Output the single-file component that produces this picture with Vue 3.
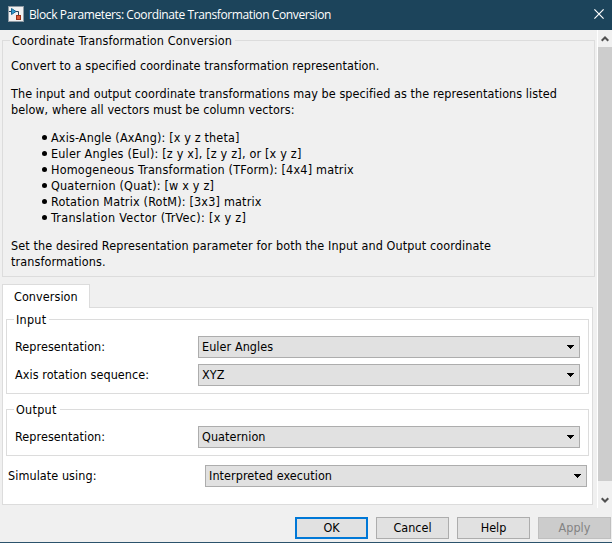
<script setup>
import { ref } from 'vue'

const bullets = [
  'Axis-Angle (AxAng): [x y z theta]',
  'Euler Angles (Eul): [z y x], [z y z], or [x y z]',
  'Homogeneous Transformation (TForm): [4x4] matrix',
  'Quaternion (Quat): [w x y z]',
  'Rotation Matrix (RotM): [3x3] matrix',
  'Translation Vector (TrVec): [x y z]',
]

const groups = ref([
  {
    title: 'Input',
    rows: [
      { label: 'Representation:', value: 'Euler Angles' },
      { label: 'Axis rotation sequence:', value: 'XYZ' },
    ],
  },
  { title: 'Output', rows: [{ label: 'Representation:', value: 'Quaternion' }] },
])

const buttons = [
  { text: 'OK', kind: 'default' },
  { text: 'Cancel', kind: '' },
  { text: 'Help', kind: '' },
  { text: 'Apply', kind: 'disabled' },
]
</script>

<template>
  <div class="dialog">
    <header class="titlebar">
      <svg class="app-icon" width="16" height="16" viewBox="0 0 16 16">
        <rect width="16" height="16" fill="#8e9aa3" />
        <rect x="1" y="1" width="14" height="14" fill="#f1f1f1" />
        <path d="M1 5.5H4M8 5.5H10.5V9" fill="none" stroke="#27445a" />
        <path d="M3.5 2.5V8.5L8 5.5Z" fill="#2f9bd0" stroke="#17658f" />
        <rect x="8.5" y="9.5" width="4" height="4" fill="#d85f3c" stroke="#9a3218" />
      </svg>
      <span class="title">Block Parameters: Coordinate Transformation Conversion</span>
      <svg class="close" width="10" height="10" viewBox="0 0 10 10">
        <path d="M.4 .4L9.6 9.6M9.6 .4L.4 9.6" stroke="#fff" stroke-width="1.2" />
      </svg>
    </header>

    <div class="viewport">
      <main class="content">
        <section class="group about">
          <div class="legend"><span>Coordinate Transformation Conversion</span></div>
          <p>Convert to a specified coordinate transformation representation.</p>
          <p>The input and output coordinate transformations may be specified as the representations listed<br>below, where all vectors must be column vectors:</p>
          <ul>
            <li v-for="b in bullets" :key="b"><i class="dot"></i><span>{{ b }}</span></li>
          </ul>
          <p class="closing">Set the desired Representation parameter for both the Input and Output coordinate<br>transformations.</p>
        </section>

        <div class="tab">Conversion</div>
        <section class="panel">
          <div v-for="g in groups" :key="g.title" class="group fields">
            <div class="legend"><span>{{ g.title }}</span></div>
            <div v-for="r in g.rows" :key="r.label" class="row">
              <label>{{ r.label }}</label>
              <div class="combo">
                <span>{{ r.value }}</span>
                <svg width="7" height="4" viewBox="0 0 7 4" shape-rendering="crispEdges"><path d="M0 0H7V1H6V2H5V3H4V4H3V3H2V2H1V1H0Z" /></svg>
              </div>
            </div>
          </div>
          <div class="row simulate">
            <label>Simulate using:</label>
            <div class="combo">
              <span>Interpreted execution</span>
              <svg width="7" height="4" viewBox="0 0 7 4" shape-rendering="crispEdges"><path d="M0 0H7V1H6V2H5V3H4V4H3V3H2V2H1V1H0Z" /></svg>
            </div>
          </div>
        </section>
      </main>

      <aside class="scrollbar">
        <div class="arrow up">
          <svg width="8" height="6" viewBox="0 0 8 6"><path d="M.7 4.8L4 1.5L7.3 4.8" fill="none" stroke="#505050" stroke-width="2.1" /></svg>
        </div>
        <div class="thumb"></div>
        <div class="arrow down">
          <svg width="8" height="6" viewBox="0 0 8 6"><path d="M.7 1.2L4 4.5L7.3 1.2" fill="none" stroke="#505050" stroke-width="2.1" /></svg>
        </div>
      </aside>
    </div>

    <footer class="actions">
      <button v-for="b in buttons" :key="b.text" :class="b.kind" :disabled="b.kind === 'disabled'">{{ b.text }}</button>
    </footer>
  </div>
</template>

<style>
body { margin: 0; overflow: hidden; }
</style>

<style scoped>
* { box-sizing: border-box; }
.dialog {
  width: 612px;
  height: 543px;
  display: flex;
  flex-direction: column;
  background: #f0f0f0;
  border-bottom: 1px solid #2b536c;
  color: #000;
  font: 12.5px/16px "DejaVu Sans Condensed", "DejaVu Sans", sans-serif;
  font-stretch: condensed;
  letter-spacing: .07px;
  white-space: nowrap;
}
.titlebar {
  height: 30px;
  flex: none;
  display: flex;
  align-items: center;
  padding: 0 8px;
  background: #1c445b;
  color: #fff;
}
.app-icon { margin: -2px 5px 0 0; }
.title { flex: 1; font: 12px/16px "Open Sans", sans-serif; letter-spacing: -.39px; }
.close { margin: -2px 0 0; }
.viewport { height: 478px; flex: none; display: flex; }
.content { width: 597px; padding: 10px 0 0 2px; }
.group { border: 1px solid #dcdcdc; }
.legend { height: 16px; margin-top: -8px; }
.legend span { display: inline-block; background: #f0f0f0; padding: 0 3px 0 2px; }
.about { width: 593px; height: 237px; padding-left: 8px; }
.about .legend { margin-left: -1px; letter-spacing: .11px; }
.about p { margin: 9px 0 12px; }
.about p + p { margin-top: 0; }
.about ul { margin: 0 0 12px 29px; padding: 0; list-style: none; letter-spacing: .19px; }
.about ul + p { margin-top: 0; }
.about li { display: flex; align-items: center; height: 16px; }
.about li:first-child { letter-spacing: .15px; }
.about li:last-child { letter-spacing: .3px; }
.closing { letter-spacing: .11px; }
.dot { width: 5px; height: 5px; border-radius: 50%; background: #000; margin: -2px 4px 0 2px; }
.tab {
  width: 88px;
  height: 24px;
  margin-top: 7px;
  padding: 4px 0 0 11px;
  background: #fff;
  border: 1px solid #dcdcdc;
  border-bottom: 0;
  position: relative;
}
.panel {
  width: 591px;
  height: 198px;
  margin-top: -1px;
  padding: 11px 3px 0;
  background: #fff;
  border: 1px solid #dcdcdc;
}
.fields { width: 583px; padding: 0 8px 7px; margin-bottom: 15px; }
.fields .legend { margin-left: -1px; letter-spacing: .25px; }
.fields .legend span { background: #fff; }
.row { display: flex; align-items: center; height: 22px; }
.legend + .row { margin-top: 8px; }
.row + .row { margin-top: 6px; }
.row label { width: 183px; flex: none; }
.combo {
  width: 382px;
  height: 22px;
  display: flex;
  align-items: center;
  justify-content: space-between;
  padding: 0 5px 0 3px;
  background: #e1e1e1;
  border: 1px solid #adadad;
}
.simulate { margin: -6px 0 0 2px; }
.simulate label { width: 197px; }
.scrollbar { width: 15px; border-left: 1px solid #fff; display: flex; flex-direction: column; }
.arrow { display: flex; justify-content: center; align-items: center; height: 17px; }
.down { height: 27px; padding-top: 10px; }
.thumb { height: 434px; background: #cdcdcd; }
.actions { display: flex; gap: 8px; justify-content: flex-end; padding: 9px 1px 0 0; }
button {
  width: 73px;
  height: 22px;
  padding: 0;
  background: #e1e1e1;
  border: 1px solid #adadad;
  color: #000;
  font: inherit;
}
.default { border: 2px solid #0078d7; }
.disabled { background: #ccc; border-color: #bfbfbf; color: #838383; }
</style>
